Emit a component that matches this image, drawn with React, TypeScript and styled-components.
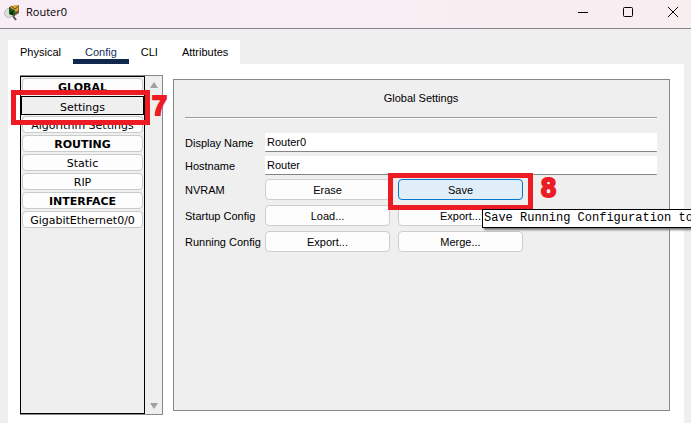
import React, { useState } from "react";
import styled, { createGlobalStyle, css } from "styled-components";

const Global = createGlobalStyle`
  *, *::before, *::after { box-sizing: border-box; }
  body { margin: 0; background: #efefef; }
  button, input { font: inherit; color: inherit; margin: 0; }
`;

const Window = styled.div`
  display: flex;
  flex-direction: column;
  min-height: 100vh;
  overflow: hidden;
  background: #efefef;
  color: #000;
  font: 11px/16px "Liberation Sans", Arial, sans-serif;
`;

const TitleBar = styled.header`
  display: flex;
  align-items: center;
  height: 29px;
  flex: none;
  padding: 0 3px 4px 4px;
  border-bottom: 1px solid #84848f;
  background: linear-gradient(90deg, #f9edf6, #f8eef0);
`;

const Title = styled.h1`
  flex: 1;
  margin: 0 0 0 5px;
  font: 400 11px/16px "Open Sans", "Noto Sans", sans-serif;
`;

const WindowButton = styled.button`
  display: grid;
  place-items: center;
  width: 30px;
  height: 24px;
  margin-left: 15px;
  padding: 0;
  border: 0;
  background: none;
`;

const TabBar = styled.nav`
  display: flex;
  align-self: flex-start;
  flex: none;
  height: 24px;
  margin: 11px 0 0 8px;
  background: #fff;
`;

const Tab = styled.button<{ $active: boolean }>`
  padding: 5px 12px 0;
  border: 0;
  border-bottom: 5px solid ${(p) => (p.$active ? "#10284d" : "#fff")};
  background: none;
  color: ${(p) => (p.$active ? "#12305f" : "#000")};
  line-height: 14px;
`;

const Body = styled.main`
  display: flex;
  flex: 1;
  gap: 10px;
  margin: 0 7px 0 8px;
  padding: 11px 14px 8px 12px;
  background: #fff;
`;

const Sidebar = styled.aside`
  display: flex;
  width: 143px;
  flex: none;
  border: 1px solid #84888f;
  border-left: 0;
  background: #efefef;
`;

const Sections = styled.div`
  display: flex;
  flex-direction: column;
  flex: 1;
  gap: 2px;
  padding: 1px;
  border: 1px solid #000;
  font: 11px/16px "DejaVu Sans", Verdana, sans-serif;
`;

const outlined = css`
  width: calc(100% + 2px);
  height: 19px;
  margin: -1px;
  padding-top: 4px;
  border-color: #000;
  border-radius: 0;
  background: #efefef;
`;

const SectionButton = styled.button<{ $heading?: boolean; $selected?: boolean }>`
  flex: none;
  width: 100%;
  height: 17px;
  padding: 3px 0 0;
  border: 1px solid #c8cccc;
  border-radius: 4px;
  background: #fdfdfd;
  font-weight: ${(p) => (p.$heading ? 700 : 400)};
  line-height: 12px;
  white-space: nowrap;
  ${(p) => p.$selected && outlined}
`;

const ScrollTrack = styled.div`
  display: flex;
  flex-direction: column;
  justify-content: space-between;
  align-items: center;
  width: 17px;
  padding: 6px 0 5px;
`;

const Panel = styled.section`
  flex: 1;
  min-width: 0;
  margin: 4px 0;
  padding: 10px 12px 10px 11px;
  border: 1px solid #84888f;
  background: #efefef;
`;

const PanelTitle = styled.h2`
  margin: 0 0 15px;
  padding-bottom: 11px;
  border-bottom: 1px solid #9b9b9f;
  box-shadow: 0 1px #fff;
  font-size: 11px;
  font-weight: 400;
  text-align: center;
`;

const Fields = styled.form`
  display: grid;
  grid-template-columns: 80px 1fr;
  align-items: center;
  row-gap: 4px;
`;

const TextInput = styled.input`
  width: 100%;
  height: 19px;
  padding: 0 2px;
  border: 0;
  border-bottom: 1px solid #858585;
  border-radius: 1px;
  background: #fff;
  outline: 0;
`;

const ActionRows = styled.div`
  display: grid;
  grid-template-columns: 80px 1fr;
  align-items: center;
  row-gap: 5px;
  margin-top: 4px;
`;

const Actions = styled.div`
  display: flex;
  gap: 8px;
`;

const Anchor = styled.div`
  position: relative;
  display: flex;
`;

const ActionButton = styled.button<{ $hot?: boolean }>`
  width: 125px;
  height: 21px;
  flex: none;
  padding: 0;
  border: 1px solid ${(p) => (p.$hot ? "#0078d0" : "#cdcdcd")};
  border-radius: 4px;
  background: ${(p) => (p.$hot ? "#e0eef9" : "#fdfdfd")};
`;

const Highlight = styled.div<{ $wide?: boolean }>`
  position: absolute;
  inset: ${(p) => (p.$wide ? "-6px -10px -10px" : "-7px -7px -11px -11px")};
  z-index: 2;
  border: 5px solid #ed1c24;
  pointer-events: none;
`;

const Step = styled.span<{ $far?: boolean }>`
  position: absolute;
  left: 100%;
  top: -7px;
  z-index: 3;
  padding-left: ${(p) => (p.$far ? 18 : 9)}px;
  color: #ed1c24;
  font: 700 27px/32px "Liberation Sans", Arial, sans-serif;
  -webkit-text-stroke: 2px #ed1c24;
  pointer-events: none;
`;

const Tooltip = styled.div`
  position: absolute;
  left: 84px;
  top: 30px;
  z-index: 3;
  padding: 0 1px;
  border: 1px solid #000;
  background: #fff;
  box-shadow: 2px 2px 2px #777;
  font: 12px/17px "Liberation Mono", "Courier New", monospace;
  white-space: nowrap;
`;

const tabs = ["Physical", "Config", "CLI", "Attributes"];
const sections = [
  { name: "GLOBAL", heading: true },
  { name: "Settings" },
  { name: "Algorithm Settings" },
  { name: "ROUTING", heading: true },
  { name: "Static" },
  { name: "RIP" },
  { name: "INTERFACE", heading: true },
  { name: "GigabitEthernet0/0" },
];

const RouterIcon = () => (
  <svg width="17" height="17" viewBox="0 0 17 17" aria-hidden="true">
    <circle cx="5" cy="9" r="4.5" fill="#deded9" stroke="#b9bbb4" />
    <path d="M5 3l10-2v8l-5 3-5-2z" fill="#72572a" />
    <path d="M6 2l9-1-1 6-4 1z" fill="#dca53a" />
    <path d="M7 2l4 3 4-3" fill="none" stroke="#6c4c1b" />
    <path d="M5 4l6 2v6l-6-2z" fill="#145f20" />
    <path d="M6 8l3-1v4l-3-1z" fill="#082e0d" />
    <path d="M9 12l3 4" stroke="#555" strokeWidth="2" />
  </svg>
);

export default function App() {
  const [tab, setTab] = useState("Config");
  const [section, setSection] = useState("Settings");
  return (
    <>
      <Global />
      <Window>
        <TitleBar>
          <RouterIcon />
          <Title>Router0</Title>
          <WindowButton aria-label="Minimize">
            <svg width="10" height="10"><path d="M0 5.5h10" stroke="#000" /></svg>
          </WindowButton>
          <WindowButton aria-label="Maximize">
            <svg width="10" height="10"><rect x=".5" y=".5" width="9" height="9" rx="1" fill="none" stroke="#000" /></svg>
          </WindowButton>
          <WindowButton aria-label="Close">
            <svg width="10" height="10"><path d="M0 0l10 10M10 0L0 10" stroke="#000" /></svg>
          </WindowButton>
        </TitleBar>
        <TabBar>
          {tabs.map((name) => (
            <Tab key={name} $active={name === tab} onClick={() => setTab(name)}>{name}</Tab>
          ))}
        </TabBar>
        <Body>
          <Sidebar>
            <Sections>
              {sections.map(({ name, heading }) => (
                <Anchor key={name}>
                  <SectionButton $heading={heading} $selected={name === section} onClick={() => setSection(name)}>
                    {name}
                  </SectionButton>
                  {name === "Settings" && (
                    <>
                      <Highlight />
                      <Step>7</Step>
                    </>
                  )}
                </Anchor>
              ))}
            </Sections>
            <ScrollTrack>
              <svg width="10" height="6"><path d="M1 6L5 0l4 6z" fill="#a0a0a0" /></svg>
              <svg width="10" height="6"><path d="M1 0h8L5 6z" fill="#a0a0a0" /></svg>
            </ScrollTrack>
          </Sidebar>
          <Panel>
            <PanelTitle>Global Settings</PanelTitle>
            <Fields onSubmit={(e) => e.preventDefault()}>
              <label htmlFor="display">Display Name</label>
              <TextInput id="display" defaultValue="Router0" />
              <label htmlFor="host">Hostname</label>
              <TextInput id="host" defaultValue="Router" />
            </Fields>
            <ActionRows>
              <span>NVRAM</span>
              <Actions>
                <ActionButton>Erase</ActionButton>
                <Anchor>
                  <ActionButton $hot aria-describedby="save-tip">Save</ActionButton>
                  <Highlight $wide />
                  <Step $far>8</Step>
                  <Tooltip id="save-tip" role="tooltip">Save Running Configuration to</Tooltip>
                </Anchor>
              </Actions>
              <span>Startup Config</span>
              <Actions>
                <ActionButton>Load...</ActionButton>
                <ActionButton>Export...</ActionButton>
              </Actions>
              <span>Running Config</span>
              <Actions>
                <ActionButton>Export...</ActionButton>
                <ActionButton>Merge...</ActionButton>
              </Actions>
            </ActionRows>
          </Panel>
        </Body>
      </Window>
    </>
  );
}
